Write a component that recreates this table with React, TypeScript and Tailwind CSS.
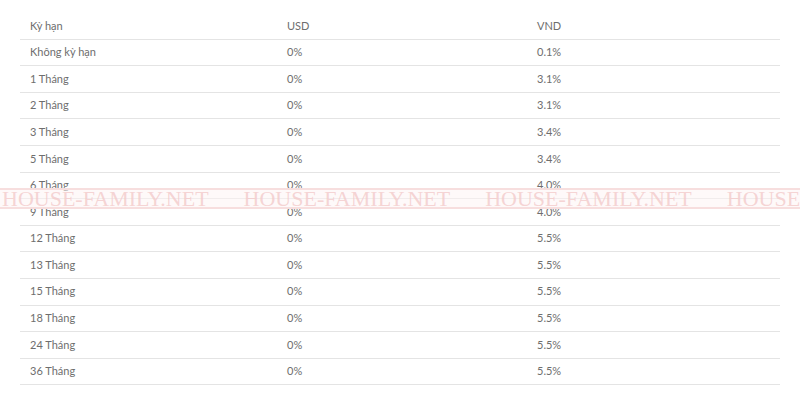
import * as React from 'react';

const rows: [string, string, string][] = [
  ['Không kỳ hạn', '0%', '0.1%'],
  ['1 Tháng', '0%', '3.1%'],
  ['2 Tháng', '0%', '3.1%'],
  ['3 Tháng', '0%', '3.4%'],
  ['5 Tháng', '0%', '3.4%'],
  ['6 Tháng', '0%', '4.0%'],
  ['9 Tháng', '0%', '4.0%'],
  ['12 Tháng', '0%', '5.5%'],
  ['13 Tháng', '0%', '5.5%'],
  ['15 Tháng', '0%', '5.5%'],
  ['18 Tháng', '0%', '5.5%'],
  ['24 Tháng', '0%', '5.5%'],
  ['36 Tháng', '0%', '5.5%'],
];

const Row: React.FC<{ cells: [string, string, string] }> = ({ cells }) => (
  <div className="flex h-[26.6px] items-center border-b border-[#e4e4e4]">
    <div className="w-[257px] pl-[10px]">{cells[0]}</div>
    <div className="w-[250px] pl-[10px]">{cells[1]}</div>
    <div className="flex-1 pl-[10px]">{cells[2]}</div>
  </div>
);

export default function App() {
  return (
    <div className="relative h-[403px] w-[800px] overflow-hidden bg-white">
      <div className="px-[20px] pt-[13px] text-[11px] text-[#6e6e6e] [font-family:Lato,sans-serif]">
        <Row cells={['Kỳ hạn', 'USD', 'VND']} />
        {rows.map((r) => (
          <Row key={r[0]} cells={r} />
        ))}
      </div>

      {/* watermark band over the table */}
      <div className="pointer-events-none absolute left-0 top-[188px] flex h-[21px] w-[800px] items-center gap-[35px] overflow-hidden border-y-2 border-[#f7dede] bg-[#fdf3f3]/50 pl-[2px] text-[22px] leading-none text-[#f3caca]/80 [font-family:'Liberation_Serif',serif]">
        {[0, 1, 2, 3].map((i) => (
          <span key={i} className="shrink-0 whitespace-nowrap">
            HOUSE-FAMILY.NET
          </span>
        ))}
      </div>
    </div>
  );
}
